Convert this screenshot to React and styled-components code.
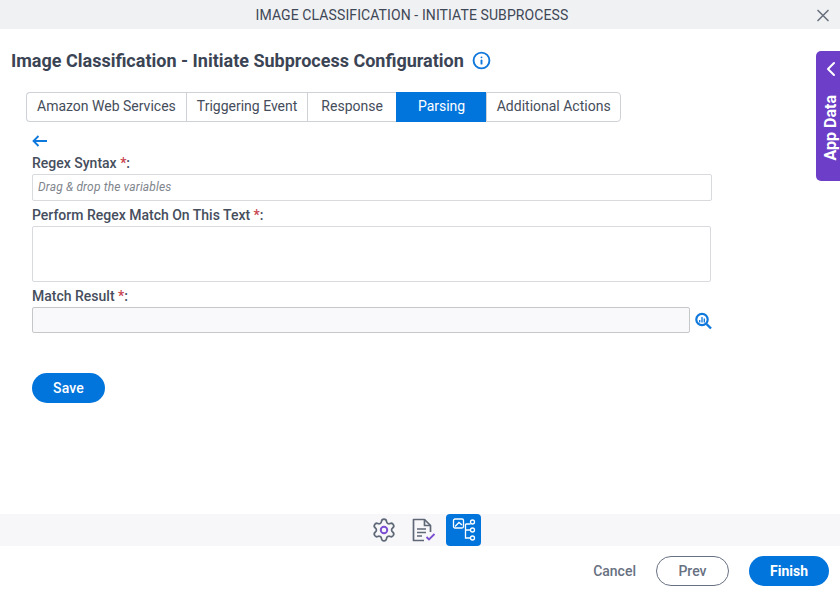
import React, { useState } from 'react';
import styled, { createGlobalStyle } from 'styled-components';
import { X, ChevronLeft, Info } from 'lucide-react';

const GlobalStyle = createGlobalStyle`
  html, body {
    margin: 0;
    padding: 0;
    background: #fff;
    font-family: Roboto, "Liberation Sans", sans-serif;
  }
  * {
    box-sizing: border-box;
  }
`;

const Page = styled.div`
  position: relative;
  width: 840px;
  height: 592px;
  display: flex;
  flex-direction: column;
  overflow: hidden;
  background: #fff;
`;

const TitleBar = styled.header`
  position: relative;
  height: 29px;
  flex-shrink: 0;
  display: flex;
  align-items: center;
  justify-content: center;
  padding-right: 16px;
  background: #f0f1f3;
  color: #3e4756;
  font-size: 14px;
  letter-spacing: 0.1px;
`;

const CloseButton = styled.button`
  position: absolute;
  top: 5px;
  right: 7px;
  width: 20px;
  height: 20px;
  padding: 0;
  display: flex;
  align-items: center;
  justify-content: center;
  border: none;
  background: transparent;
  color: #6b7280;
`;

const Content = styled.main`
  flex-grow: 1;
  padding: 19px 0 0 11px;
`;

const Heading = styled.div`
  display: flex;
  align-items: center;
  gap: 8px;
  height: 24px;
`;

const Title = styled.h1`
  margin: 0;
  font-size: 18px;
  font-weight: 700;
  color: #3b4454;
`;

const InfoIcon = styled(Info)`
  color: #0f78dc;
`;

const Tabs = styled.div`
  display: flex;
  margin: 20px 0 0 15px;
  height: 30px;
`;

const Tab = styled.button`
  height: 100%;
  padding: 0 ${props => props.$pad}px 2px;
  border: 1px solid ${props => props.$active ? '#0275dc' : '#ced1d6'};
  border-right-width: ${props => props.$last ? 1 : 0}px;
  border-radius: ${props => props.$first ? '4px 0 0 4px' : props.$last ? '0 4px 4px 0' : '0'};
  background: ${props => props.$active ? '#0275dc' : '#fff'};
  color: ${props => props.$active ? '#fff' : '#454d5b'};
  font-family: inherit;
  font-size: 14px;
  cursor: pointer;
`;

const Form = styled.div`
  width: 680px;
  margin-left: 21px;
`;

const BackLink = styled.div`
  height: 18px;
  margin-top: 10px;
  display: flex;
  align-items: center;
`;

const Label = styled.div`
  height: 17px;
  margin-top: ${props => props.$top}px;
  font-size: 14px;
  font-weight: 500;
  line-height: 17px;
  color: #464e5d;
`;

const Star = styled.span`
  color: #c8444e;
`;

const TextField = styled.div`
  width: ${props => props.$width || '100%'};
  height: ${props => props.$height}px;
  margin-top: ${props => props.$top || 0}px;
  padding: 0 5px 2px;
  display: flex;
  align-items: center;
  border: 1px solid ${props => props.$disabled ? '#c6c7c9' : '#d8dade'};
  border-radius: 2px;
  background: ${props => props.$disabled ? '#f9f9fb' : '#fff'};
  color: #80858d;
  font-size: 12px;
  font-style: italic;
  letter-spacing: 0.15px;
`;

const FieldRow = styled.div`
  display: flex;
  align-items: center;
  gap: 5px;
  margin-top: 2px;
`;

const SearchButton = styled.div`
  width: 17px;
  height: 18px;
  margin-top: 2px;
  display: flex;
`;

const SaveButton = styled.button`
  display: block;
  width: 73px;
  height: 30px;
  margin-top: 40px;
  border: none;
  border-radius: 15px;
  background: #0275dc;
  color: #fff;
  font-family: inherit;
  font-size: 14px;
  font-weight: 500;
  letter-spacing: 0.2px;
  cursor: pointer;
`;

const IconBar = styled.div`
  height: 32px;
  flex-shrink: 0;
  display: flex;
  align-items: center;
  justify-content: center;
  gap: 5px;
  padding-left: 7px;
  background: #f7f7f9;
`;

const IconTab = styled.div`
  width: 35px;
  height: 32px;
  display: flex;
  align-items: center;
  justify-content: center;
  border-radius: 4px;
  background: ${props => props.$active ? '#0275dc' : 'transparent'};
`;

const Footer = styled.footer`
  height: 46px;
  flex-shrink: 0;
  display: flex;
  align-items: flex-start;
  justify-content: flex-end;
  padding: 10px 11px 0 0;
`;

const CancelButton = styled.button`
  margin-right: 20px;
  height: 30px;
  padding: 0;
  border: none;
  background: transparent;
  color: #687182;
  font-family: inherit;
  font-size: 14px;
  font-weight: 500;
`;

const PrevButton = styled.button`
  width: 73px;
  height: 30px;
  margin-right: 20px;
  border: 1px solid #687182;
  border-radius: 15px;
  background: #fff;
  color: #687182;
  font-family: inherit;
  font-size: 14px;
  font-weight: 500;
`;

const FinishButton = styled.button`
  width: 80px;
  height: 30px;
  border: none;
  border-radius: 15px;
  background: #0275dc;
  color: #fff;
  font-family: inherit;
  font-size: 14px;
  font-weight: 700;
`;

const AppDataTab = styled.aside`
  position: absolute;
  top: 51px;
  right: 0;
  width: 24px;
  height: 130px;
  padding: 6px 0 0 5px;
  display: flex;
  flex-direction: column;
  align-items: center;
  gap: 14px;
  border-radius: 5px 0 0 5px;
  background: #6d3fc8;
  color: #fff;
`;

const AppDataLabel = styled.span`
  writing-mode: vertical-rl;
  transform: rotate(180deg);
  font-size: 16px;
  font-weight: 700;
  line-height: 17px;
  white-space: nowrap;
`;

const tabs = [
  { name: 'Amazon Web Services', pad: 10 },
  { name: 'Triggering Event', pad: 10 },
  { name: 'Response', pad: 13 },
  { name: 'Parsing', pad: 21 },
  { name: 'Additional Actions', pad: 9.5 },
];

function BackArrow() {
  return (
    <svg width="15" height="12" viewBox="0 0 15 12" fill="none" stroke="#0f78dc" strokeWidth="1.8">
      <path d="M1.5 6H15M6.5 1L1.5 6L6.5 11" />
    </svg>
  );
}

function GearIcon() {
  return (
    <svg width="26" height="26" viewBox="0 0 24 24" fill="none" strokeWidth="1.6">
      <path
        stroke="#5f6877"
        d="M9.671 4.136a2.34 2.34 0 0 1 4.659 0 2.34 2.34 0 0 0 3.319 1.915 2.34 2.34 0 0 1 2.33 4.033 2.34 2.34 0 0 0 0 3.831 2.34 2.34 0 0 1-2.33 4.033 2.34 2.34 0 0 0-3.319 1.915 2.34 2.34 0 0 1-4.659 0 2.34 2.34 0 0 0-3.32-1.915 2.34 2.34 0 0 1-2.33-4.033 2.34 2.34 0 0 0 0-3.831A2.34 2.34 0 0 1 6.35 6.051a2.34 2.34 0 0 0 3.32-1.915"
      />
      <circle cx="12" cy="12" r="3" stroke="#7b4fd0" strokeWidth="1.8" />
    </svg>
  );
}

function ReportIcon() {
  return (
    <svg width="24" height="24" viewBox="0 0 24 24" fill="none">
      <path d="M12 22.5H1.5V1.5H12.5L18.5 7.5V14" stroke="#5f6877" strokeWidth="1.7" strokeLinejoin="round" />
      <path d="M12.5 1.5V7.5H18.5" stroke="#5f6877" strokeWidth="1.7" strokeLinejoin="round" />
      <path d="M5 11H14M5 14.5H14M5 18H10" stroke="#5f6877" strokeWidth="1.6" />
      <path d="M14.5 19L17 21.5L22.5 16" stroke="#7b4fd0" strokeWidth="1.8" />
    </svg>
  );
}

function TreeIcon() {
  return (
    <svg width="28" height="28" viewBox="0 0 28 28" fill="none" stroke="#fff" strokeWidth="1.3">
      <rect x="3.5" y="3" width="10" height="9" rx="1.5" />
      <path d="M5 10.5L9 6.5L12 9" />
      <path d="M15.5 8V22H20.5M15.5 14H20.5M15.5 8H20.5" />
      <circle cx="22.5" cy="6" r="2" />
      <circle cx="22.5" cy="14" r="2" />
      <circle cx="22.5" cy="22" r="2" />
    </svg>
  );
}

function DataSearchIcon() {
  return (
    <svg width="17" height="18" viewBox="0 0 17 18" fill="none" stroke="#0f78dc">
      <circle cx="7" cy="7.5" r="5.7" strokeWidth="2.2" />
      <path d="M11.5 12L16 16.5" strokeWidth="2.4" />
      <path d="M4.7 8V10.5M7 5V10.5M9.3 6.5V10.5" strokeWidth="1.3" />
    </svg>
  );
}

export default function App() {
  const [activeTab, setActiveTab] = useState('Parsing');

  return (
    <Page>
      <GlobalStyle />
      <TitleBar>
        IMAGE CLASSIFICATION - INITIATE SUBPROCESS
        <CloseButton aria-label="Close">
          <X size={21} strokeWidth={2} />
        </CloseButton>
      </TitleBar>

      <Content>
        <Heading>
          <Title>Image Classification - Initiate Subprocess Configuration</Title>
          <InfoIcon size={19} strokeWidth={2.4} />
        </Heading>

        <Tabs>
          {tabs.map((tab, i) => (
            <Tab
              key={tab.name}
              $first={i === 0}
              $last={i === tabs.length - 1}
              $pad={tab.pad}
              $active={activeTab === tab.name}
              onClick={() => setActiveTab(tab.name)}
            >
              {tab.name}
            </Tab>
          ))}
        </Tabs>

        <Form>
          <BackLink>
            <BackArrow />
          </BackLink>
          <Label $top={5}>Regex Syntax <Star>*</Star>:</Label>
          <TextField $height={27} $top={2}>Drag &amp; drop the variables</TextField>
          <Label $top={6}>Perform Regex Match On This Text <Star>*</Star>:</Label>
          <TextField $height={56} $top={2} $width="679px" />
          <Label $top={6}>Match Result <Star>*</Star>:</Label>
          <FieldRow>
            <TextField $height={26} $width="658px" $disabled />
            <SearchButton>
              <DataSearchIcon />
            </SearchButton>
          </FieldRow>
          <SaveButton>Save</SaveButton>
        </Form>
      </Content>

      <IconBar>
        <IconTab><GearIcon /></IconTab>
        <IconTab><ReportIcon /></IconTab>
        <IconTab $active><TreeIcon /></IconTab>
      </IconBar>

      <Footer>
        <CancelButton>Cancel</CancelButton>
        <PrevButton>Prev</PrevButton>
        <FinishButton>Finish</FinishButton>
      </Footer>

      <AppDataTab>
        <ChevronLeft size={24} strokeWidth={2} />
        <AppDataLabel>App Data</AppDataLabel>
      </AppDataTab>
    </Page>
  );
}
